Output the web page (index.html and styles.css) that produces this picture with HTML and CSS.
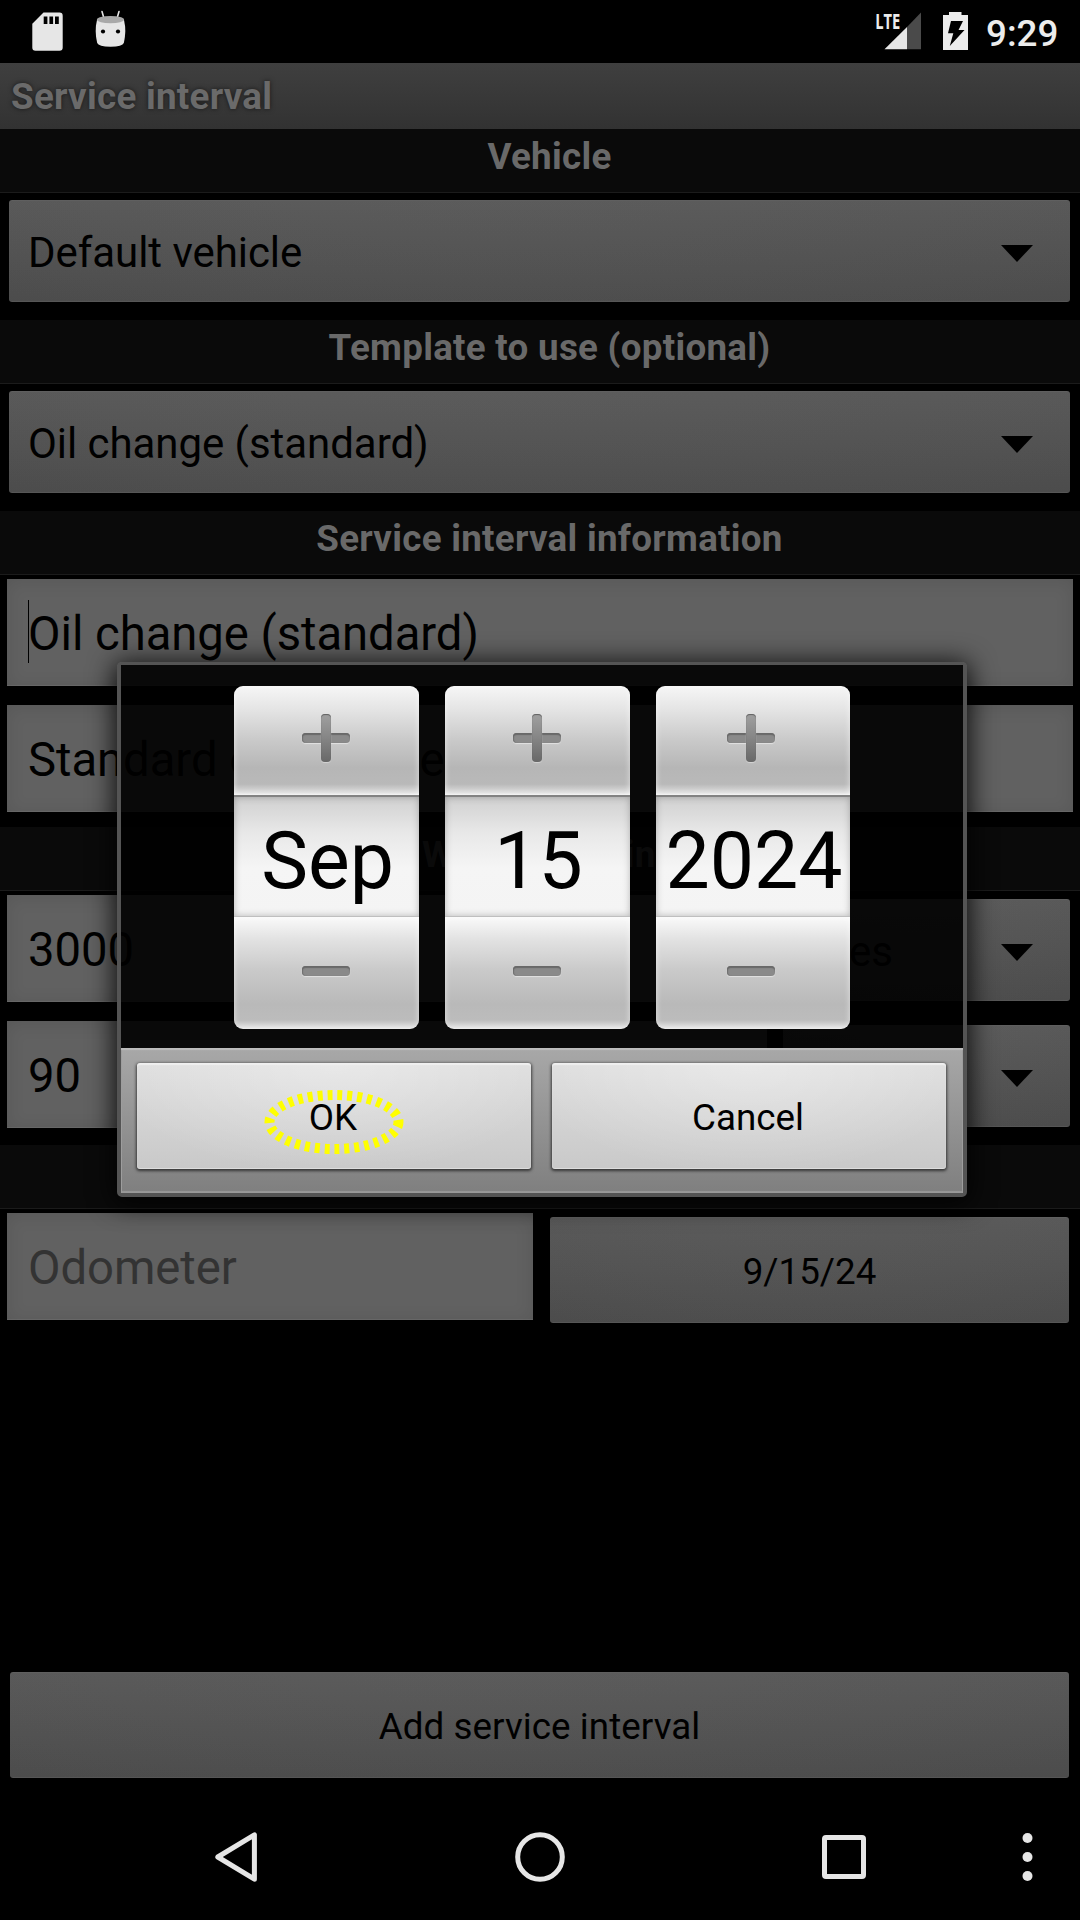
FILE: index.html
```html
<!DOCTYPE html>
<html lang="en">
<head>
<meta charset="utf-8">
<title>Service interval</title>
<link rel="stylesheet" href="styles.css">
</head>
<body>
<div class="screen">
  <header class="status">
    <svg class="status-left" width="140" height="63" viewBox="0 0 140 63">
      <path fill="#e6e6e6" fill-rule="evenodd" d="M43.500 12.500H59.500Q62.700 12.500 62.700 15.700V47.500Q62.700 50.700 59.500 50.700H35.500Q32.300 50.700 32.300 47.500V23.700ZM43.700 16.500V24H47.400V16.500ZM49.400 16.500V24H53.100V16.500ZM55 16.500V24H58.800V16.500Z"/>
      <path fill="none" stroke="#e6e6e6" stroke-width="1.600" stroke-linecap="round" d="M102 11.500L104 18.500M119 11.500L117 18.500"/>
      <path fill="#e6e6e6" d="M97 20Q94.300 31 97.200 43Q98.500 46.700 110.500 46.700Q122.500 46.700 123.800 43Q126.700 31 124 20Z"/>
      <ellipse cx="110.500" cy="19.600" rx="13.600" ry="3.600" fill="#a9a9a9"/>
      <circle cx="103" cy="31.500" r="2.100"/><circle cx="118" cy="31.500" r="2.100"/>
    </svg>
    <div class="status-right">
      <svg width="100" height="63" viewBox="870 0 100 63">
        <path fill="#4a4a4a" d="M921 12.500V49.300H907V27Z"/>
        <path fill="#e6e6e6" d="M884.500 49.300L907 27V49.300Z"/>
        <text class="lte" x="875.300" y="29" textLength="25" lengthAdjust="spacingAndGlyphs">LTE</text>
        <path fill="#ececec" d="M943 15H949V12H961.500V15H968V50H943Z"/>
        <path d="M951 21H963L958.500 30H964.500L949.800 46L953.300 33.300H948Z"/>
      </svg>
      <span class="clock">9:29</span>
    </div>
  </header>
  <div class="title">Service interval</div>
  <main>
    <h2>Vehicle</h2>
    <div class="block choice"><div class="spinner">Default vehicle</div></div>
    <h2>Template to use (optional)</h2>
    <div class="block choice"><div class="spinner">Oil change (standard)</div></div>
    <h2>Service interval information</h2>
    <div class="block fields">
      <div class="edit"><i class="caret"></i>Oil change (standard)</div>
      <div class="edit">Standard oil change</div>
    </div>
    <h2>Warning timing</h2>
    <div class="block measures">
      <div class="edit">3000</div><div class="spinner distance">Miles</div>
      <div class="edit">90</div><div class="spinner"></div>
    </div>
    <h2></h2>
    <div class="block last">
      <div class="edit hint">Odometer</div>
      <div class="button">9/15/24</div>
    </div>
  </main>
  <div class="button add">Add service interval</div>
  <nav>
    <svg width="1080" height="126" viewBox="0 1794 1080 126" fill="none" stroke="#e6e6e6" stroke-width="5">
      <path stroke-linejoin="round" d="M254.400 1834.800V1879.200L217.800 1857Z"/>
      <circle cx="540" cy="1857" r="22.300"/>
      <rect x="824.500" y="1837.500" width="39" height="39" rx="1.500"/>
      <g fill="#e6e6e6" stroke="none"><circle cx="1027.500" cy="1838" r="5"/><circle cx="1027.500" cy="1857" r="5"/><circle cx="1027.500" cy="1876" r="5"/></g>
    </svg>
  </nav>

  <section class="dialog">
    <div class="pickers">
      <div class="picker">
        <div class="step up"><i class="sign plus"></i></div>
        <div class="value">Sep</div>
        <div class="step down"><i class="sign"></i></div>
      </div>
      <div class="picker">
        <div class="step up"><i class="sign plus"></i></div>
        <div class="value">15</div>
        <div class="step down"><i class="sign"></i></div>
      </div>
      <div class="picker year">
        <div class="step up"><i class="sign plus"></i></div>
        <div class="value">2024</div>
        <div class="step down"><i class="sign"></i></div>
      </div>
    </div>
    <div class="actions">
      <div class="action">OK
        <svg class="ring" width="144" height="70" viewBox="0 0 144 70"><ellipse cx="72" cy="35" rx="64.500" ry="27" fill="none" stroke="#ffff00" stroke-width="10" stroke-dasharray="5 4.900"/></svg>
      </div>
      <div class="action">Cancel</div>
    </div>
  </section>
</div>
</body>
</html>
```
FILE: styles.css
```css
* { box-sizing: border-box; }
body { margin: 0; background: #000; font-family: Roboto, sans-serif; color: #000; }
.screen { position: relative; width: 1080px; height: 1920px; display: flex; flex-direction: column; overflow: hidden; background: #000; }

.status { height: 63px; display: flex; justify-content: space-between; flex: none; }
.status svg { display: block; }
.status-right { display: flex; width: 210px; }
.lte { font: bold 22px "Open Sans", sans-serif; fill: #ececec; }
.clock { margin-left: 16px; color: #ececec; font-size: 36.75px; font-weight: 500; line-height: 67px; white-space: nowrap; }

.title { flex: none; height: 66px; padding-left: 11px; background: linear-gradient(#3f3f3f, #323232); color: #6a6a6a; font-size: 36.75px; font-weight: bold; line-height: 67px; letter-spacing: .28px; text-shadow: 0 0 5px rgba(0,0,0,.6); }

h2 { margin: 0; height: 64px; padding-left: 19px; background: #0a0a0a; border-bottom: 1px solid #1b1b1b; color: #696969; font-size: 36.75px; font-weight: bold; line-height: 55px; letter-spacing: .28px; text-align: center; }
.block { display: grid; align-content: start; }
.choice { height: 127px; padding: 7px 10px 0 9px; }
.fields { height: 252px; padding: 4px 7px 0; row-gap: 19px; }
.measures { height: 254px; padding: 4px 10px 0 7px; grid-template-columns: 760px 287px; column-gap: 16px; row-gap: 19px; }
.last { padding: 4px 11px 0 7px; grid-template-columns: 526px 519px; column-gap: 17px; }

.spinner, .button { background: radial-gradient(ellipse 75% 160% at 48% -30%, rgba(110,110,110,.2), transparent), linear-gradient(#585858, #4c4c4c); border-radius: 3px; box-shadow: inset 0 1px #5f5f5f, inset 0 -1px #565656; }
.spinner { position: relative; height: 102px; padding: 3px 0 0 19px; font-size: 42px; line-height: 99px; letter-spacing: -.05px; }
.spinner::after { content: ""; position: absolute; right: 37px; top: 45px; width: 32px; height: 17px; background: #000; clip-path: polygon(0 0, 100% 0, 50% 100%); }
.measures .spinner { margin-top: 4px; }
.distance { margin-left: -10px; }
.edit { position: relative; height: 107px; padding: 4px 0 0 21px; background: #616161; box-shadow: inset 0 2px 18px rgba(0,0,0,.1), inset 0 -1px #6c6c6c; font-size: 47.25px; line-height: 103px; letter-spacing: -.05px; }
.caret { position: absolute; left: 21px; top: 21px; width: 1px; height: 63px; background: #000; }
.hint { color: #333; }
.button { height: 106px; padding-top: 3px; font-size: 36.75px; line-height: 103px; text-align: center; }
.last .button { margin-top: 4px; }
.add { margin: auto 11px 16px 10px; letter-spacing: .07px; }
nav { height: 126px; flex: none; }
nav svg { display: block; }

.dialog { position: absolute; left: 117px; top: 662px; width: 850px; height: 535px; border: 4px solid #545454; border-top-width: 3px; border-radius: 5px; box-shadow: 0 3px 26px 3px rgba(0,0,0,.85), inset 0 0 1px #222; }
.pickers { display: grid; grid-template-columns: 185px 185px 194px; column-gap: 26px; height: 383px; padding: 21px 0 0 113px; background: rgba(0,0,0,.9); }
.picker { height: 343px; display: flex; flex-direction: column; border-radius: 9px; overflow: hidden; }
.step { display: flex; align-items: center; justify-content: center; }
.up { height: 109px; padding: 0 2px 5px 0; background: linear-gradient(#f6f6f6, #e4e4e4 22%, #c9c9c9 50%, #b6b6b6 75%, #b9b9b9 90%, #dedede 98%, #f0f0f0); box-shadow: inset 0 0 6px rgba(255,255,255,.6); }
.down { height: 112px; padding: 0 2px 4px 0; background: linear-gradient(#fafafa, #e2e2e2 20%, #c9c9c9 48%, #b9b9b9 78%, #bcbcbc 92%, #e6e6e6); box-shadow: inset 0 0 6px rgba(255,255,255,.6); }
.year .step { padding-right: 4px; }
.value { height: 122px; border-top: 2px solid #828282; border-bottom: 1px solid #bfbfbf; padding: 9px 0 0 2px; background: linear-gradient(#d0d0d0, #e8e8e8 30%, #f5f5f5 60%, #f4f4f4); box-shadow: inset 0 0 7px rgba(0,0,0,.25); font-size: 78.75px; line-height: 110px; text-align: center; white-space: nowrap; }
.sign { position: relative; width: 48px; height: 10px; border-radius: 4px; background: #8a8a8a; box-shadow: inset 0 2px 1px #696969, inset 1px 0 1px #707070, 0 1px 1px #e2e2e2; }
.plus::before { content: ""; position: absolute; left: 19px; top: -19px; width: 10px; height: 48px; border-radius: 4px; background: linear-gradient(#a0a0a0, #858585 50%, #686868); box-shadow: inset 0 1px 1px #606060, 0 1px 1px #d5d5d5; }

.actions { height: 145px; display: grid; grid-template-columns: 394px 394px; column-gap: 21px; padding: 15px 0 0 16px; background: linear-gradient(#a8a8a8, #7f7f7f); box-shadow: inset 0 2px 1px #bdbdbd, inset 0 -2px 1px #999, inset 1px 0 #999, inset -1px 0 #999; }
.action { position: relative; height: 106px; padding: 3px 2px 0 0; border-radius: 3px; background: radial-gradient(ellipse 60% 110% at 50% -5%, rgba(255,255,255,.35), transparent), linear-gradient(#dedede, #c9c9c9); box-shadow: 0 1px 3px 1px rgba(0,0,0,.6), inset 0 2px 1px #efefef, inset 0 -1px #ddd; font-size: 36.75px; line-height: 104px; text-align: center; }
.ring { position: absolute; left: 125px; top: 24px; }
```
